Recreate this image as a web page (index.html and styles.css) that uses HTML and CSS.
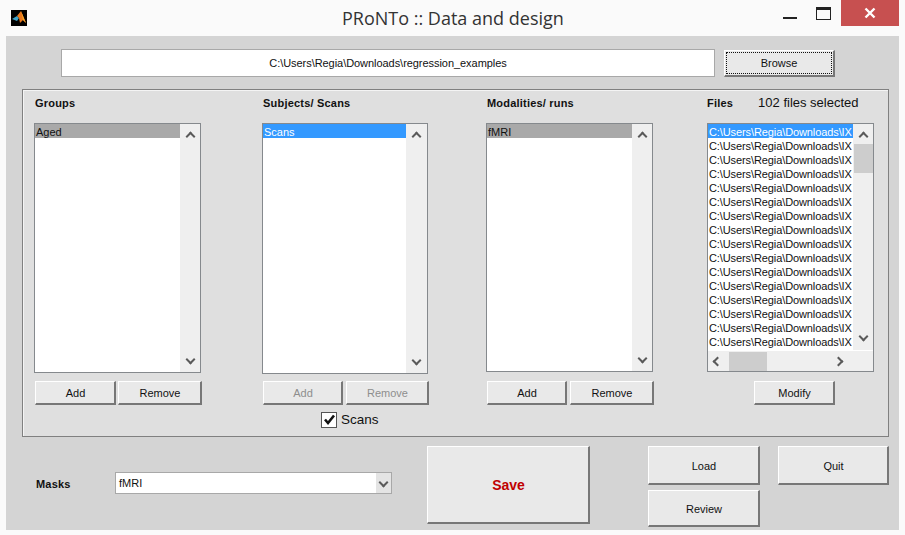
FILE: index.html
```html
<!DOCTYPE html>
<html>
<head>
  <title>PRoNTo :: Data and design</title>
  <link rel="stylesheet" href="styles.css">
</head>
<body>
  <div class="titlebar">
    <svg class="app-icon" width="16" height="16" viewBox="0 0 16 16">
      <rect width="16" height="16" fill="#000"/>
      <path d="M1 9 L6 6 L8 8 L6 11 Z" fill="#3fa3c8"/>
      <path d="M6 6 L10 1 L15 13 L12 10 L9 13 L8 8 Z" fill="#e8761c"/>
      <path d="M10 1 L12 10 L15 13 Z" fill="#f4a52a"/>
    </svg>
    <div class="title">PRoNTo :: Data and design</div>
    <div class="win-buttons">
      <div class="win-min"></div>
      <div class="win-max"></div>
      <div class="win-close">
        <svg width="12" height="12" viewBox="0 0 12 12"><path d="M1.5 1.5 L10.5 10.5 M10.5 1.5 L1.5 10.5" stroke="#fff" stroke-width="2.4"/></svg>
      </div>
    </div>
  </div>

  <div class="figure">
    <div class="path-row">
      <div class="path-box">C:\Users\Regia\Downloads\regression_examples</div>
      <div class="btn browse"><span class="focus-ring">Browse</span></div>
    </div>

    <div class="panel">
      <div class="col col-groups">
        <div class="col-head"><b>Groups</b></div>
        <div class="listbox h-250">
          <div class="items"><div class="item inactive">Aged</div></div>
          <div class="vscroll"><span class="chev up"></span><span class="chev down"></span></div>
        </div>
        <div class="btn-row">
          <div class="btn add">Add</div>
          <div class="btn remove">Remove</div>
        </div>
      </div>

      <div class="col col-subjects">
        <div class="col-head"><b>Subjects/ Scans</b></div>
        <div class="listbox h-251">
          <div class="items"><div class="item active">Scans</div></div>
          <div class="vscroll"><span class="chev up"></span><span class="chev down"></span></div>
        </div>
        <div class="btn-row">
          <div class="btn add disabled">Add</div>
          <div class="btn remove disabled">Remove</div>
        </div>
        <div class="check-row">
          <span class="checkbox">
            <svg width="13" height="13" viewBox="0 0 13 13"><path d="M2 6.5 L5 10 L11 2.5" fill="none" stroke="#111" stroke-width="2.6"/></svg>
          </span>
          <span>Scans</span>
        </div>
      </div>

      <div class="col col-modalities">
        <div class="col-head"><b>Modalities/ runs</b></div>
        <div class="listbox h-249">
          <div class="items"><div class="item inactive">fMRI</div></div>
          <div class="vscroll"><span class="chev up"></span><span class="chev down"></span></div>
        </div>
        <div class="btn-row">
          <div class="btn add">Add</div>
          <div class="btn remove">Remove</div>
        </div>
      </div>

      <div class="col col-files">
        <div class="col-head files-head"><b>Files</b><span class="count">102 files selected</span></div>
        <div class="listbox h-249 files-list">
          <div class="items" id="fileItems"></div>
          <div class="vscroll"><span class="chev up"></span><span class="thumb"></span><span class="chev down"></span></div>
          <div class="hscroll"><span class="chev left"></span><span class="hthumb"></span><span class="chev right"></span></div>
        </div>
        <div class="btn-row center"><div class="btn modify">Modify</div></div>
      </div>
    </div>

    <div class="bottom">
      <b class="masks-label">Masks</b>
      <div class="select">
        <span class="select-text">fMRI</span>
        <span class="select-arrow"><span class="chev down"></span></span>
      </div>
      <div class="btn save">Save</div>
      <div class="load-stack">
        <div class="btn load">Load</div>
        <div class="btn review">Review</div>
      </div>
      <div class="btn quit">Quit</div>
    </div>
  </div>

  <script>
    const fileItems = document.getElementById("fileItems");
    for (let i = 0; i < 16; i++) {
      const row = document.createElement("div");
      row.className = i === 0 ? "item active" : "item";
      row.textContent = "C:\\Users\\Regia\\Downloads\\IX";
      fileItems.appendChild(row);
    }
  </script>
</body>
</html>
```
FILE: styles.css
```css
* {
  box-sizing: border-box;
}
body {
  margin: 0;
  width: 905px;
  height: 535px;
  overflow: hidden;
  background: #fafafa;
  font-family: "Liberation Sans", Arial, sans-serif;
  font-size: 11px;
  color: #111;
}
b {
  font-weight: bold;
  letter-spacing: 0.2px;
}

.titlebar {
  display: flex;
  align-items: flex-start;
  height: 36px;
  position: relative;
}
.app-icon {
  margin: 10px 0 0 11px;
}
.title {
  position: absolute;
  left: 342px;
  top: 5px;
  font-family: "Open Sans", sans-serif;
  font-size: 18px;
  line-height: 26px;
  color: #333;
}
.win-buttons {
  margin-left: auto;
  margin-right: 6px;
  display: flex;
  align-items: flex-start;
}
.win-min {
  width: 14px;
  height: 2px;
  margin: 17px 0 0 0;
  background: #222;
}
.win-max {
  width: 15px;
  height: 13px;
  margin: 7px 0 0 19px;
  border: 1px solid #222;
  border-top-width: 3px;
}
.win-close {
  width: 58px;
  height: 26px;
  margin-left: 10px;
  background: #c75050;
  display: flex;
  align-items: center;
  justify-content: center;
}

.figure {
  margin: 0 6px;
  height: 494px;
  background: #d4d4d4;
  padding: 13px 10px 0 16px;
}
.path-row {
  display: flex;
  align-items: flex-start;
  padding-left: 39px;
}
.path-box {
  width: 654px;
  height: 28px;
  background: #fff;
  border: 1px solid #a8a8a8;
  text-align: center;
  line-height: 26px;
  font-size: 11px;
  letter-spacing: -0.05px;
}

.btn {
  background: #e9e9e9;
  border: 1px solid;
  border-color: #fff #777 #777 #fff;
  border-width: 1px 2px 2px 1px;
  display: flex;
  align-items: center;
  justify-content: center;
  padding: 1px 0 0 1px;
  font-size: 11px;
  flex: none;
}
.btn.disabled {
  color: #8e8e8e;
}
.browse {
  width: 111px;
  height: 27px;
  margin: 1px 0 0 9px;
  padding: 1px;
}
.focus-ring {
  display: block;
  width: 100%;
  height: 100%;
  border: 1px dotted #111;
  text-align: center;
  line-height: 21px;
}

.panel {
  width: 867px;
  height: 348px;
  margin-top: 12px;
  background: #dfdfdf;
  border: 1px solid #808080;
  box-shadow: inset 1px 1px 0 #f4f4f4;
  display: grid;
  grid-template-columns: 228px 224px 221px 167px;
  padding-left: 11px;
}
.col-head {
  height: 33px;
  padding: 7px 0 0 1px;
  line-height: 13px;
}
.files-head {
  display: flex;
  padding-left: 0;
}
.count {
  margin-left: 25px;
  font-size: 13px;
  line-height: 12px;
  white-space: nowrap;
}

.listbox {
  position: relative;
  width: 167px;
  background: #fff;
  border: 1px solid #85898d;
  display: flex;
}
.col-subjects .listbox {
  width: 166px;
}
.col-subjects .vscroll {
  width: 21px;
}
.h-250 { height: 250px; }
.h-251 { height: 251px; }
.h-249 { height: 249px; }
.items {
  flex: 1;
  overflow: hidden;
}
.item {
  height: 14px;
  line-height: 15px;
  padding: 1px 0 0 1px;
  font-size: 11px;
  white-space: nowrap;
}
.item.active {
  background: #3399ff;
  color: #fff;
}
.item.inactive {
  background: #a9a9a9;
}
.vscroll {
  flex: none;
  width: 20px;
  background: #efefef;
  display: flex;
  flex-direction: column;
  justify-content: space-between;
  align-items: center;
  padding: 6px 0;
}
.thumb {
  width: 19px;
  height: 29px;
  background: #cdcdcd;
  margin-top: 4px;
  margin-bottom: auto;
}
.files-list .items {
  height: 227px;
}
.files-list .item {
  letter-spacing: -0.1px;
}
.files-list .vscroll {
  height: 226px;
  padding: 6px 0 7px;
}
.hscroll {
  position: absolute;
  left: 0;
  right: 0;
  bottom: 0;
  height: 20px;
  background: #efefef;
  display: flex;
  align-items: center;
}
.hscroll .left {
  margin-left: 6px;
}
.hthumb {
  width: 38px;
  height: 19px;
  margin-left: 8px;
  background: #cdcdcd;
}
.hscroll .right {
  margin-left: 68px;
}

/* scrollbar arrows, rotated corner of a square */
.chev {
  display: block;
  width: 7px;
  height: 7px;
  border: solid #5a5a5a;
  border-width: 2px 0 0 2px;
  flex: none;
}
.chev.up {
  transform: rotate(45deg);
  margin-top: 3px;
}
.chev.down {
  transform: rotate(225deg);
  margin-bottom: 3px;
}
.chev.left {
  transform: rotate(-45deg);
}
.chev.right {
  transform: rotate(135deg);
}

.btn-row {
  display: flex;
  gap: 2px;
  margin-top: 8px;
  padding-left: 1px;
}
.col-subjects .btn-row {
  gap: 3px;
  margin-top: 7px;
}
.col-modalities .btn-row {
  gap: 3px;
  margin-top: 9px;
}
.col-files .btn-row {
  margin-top: 9px;
}
.btn-row.center {
  padding-left: 47px;
}
.btn.add {
  width: 81px;
  height: 24px;
}
.col-subjects .btn.add,
.col-modalities .btn.add {
  width: 80px;
}
.btn.remove {
  width: 84px;
  height: 24px;
}
.col-subjects .btn.remove {
  width: 83px;
}
.btn.modify {
  width: 81px;
  height: 24px;
}
.check-row {
  display: flex;
  align-items: center;
  gap: 4px;
  margin: 6px 0 0 59px;
  font-size: 13.5px;
  line-height: 17px;
}
.checkbox {
  width: 16px;
  height: 16px;
  background: #fff;
  border: 1px solid #555;
  display: flex;
  align-items: center;
  justify-content: center;
}

.bottom {
  display: flex;
  align-items: flex-start;
  margin-top: 9px;
}
.masks-label {
  width: 79px;
  margin: 32px 0 0 14px;
  line-height: 13px;
}
.select {
  width: 277px;
  height: 22px;
  margin-top: 26px;
  background: #fff;
  border: 1px solid #a8a8a8;
  display: flex;
  align-items: center;
  justify-content: space-between;
}
.select-text {
  padding-left: 3px;
}
.select-arrow {
  width: 15px;
  height: 20px;
  background: #e4e4e4;
  display: flex;
  align-items: center;
  justify-content: center;
}
.select-arrow .chev {
  margin: 0 0 2px;
}
.save {
  width: 163px;
  height: 78px;
  margin-left: 35px;
  font-size: 14px;
  font-weight: bold;
  color: #c00000;
}
.load-stack {
  display: flex;
  flex-direction: column;
  gap: 5px;
  margin-left: 58px;
}
.load {
  width: 112px;
  height: 39px;
}
.review {
  width: 112px;
  height: 37px;
}
.quit {
  width: 111px;
  height: 39px;
  margin-left: 18px;
}
```
